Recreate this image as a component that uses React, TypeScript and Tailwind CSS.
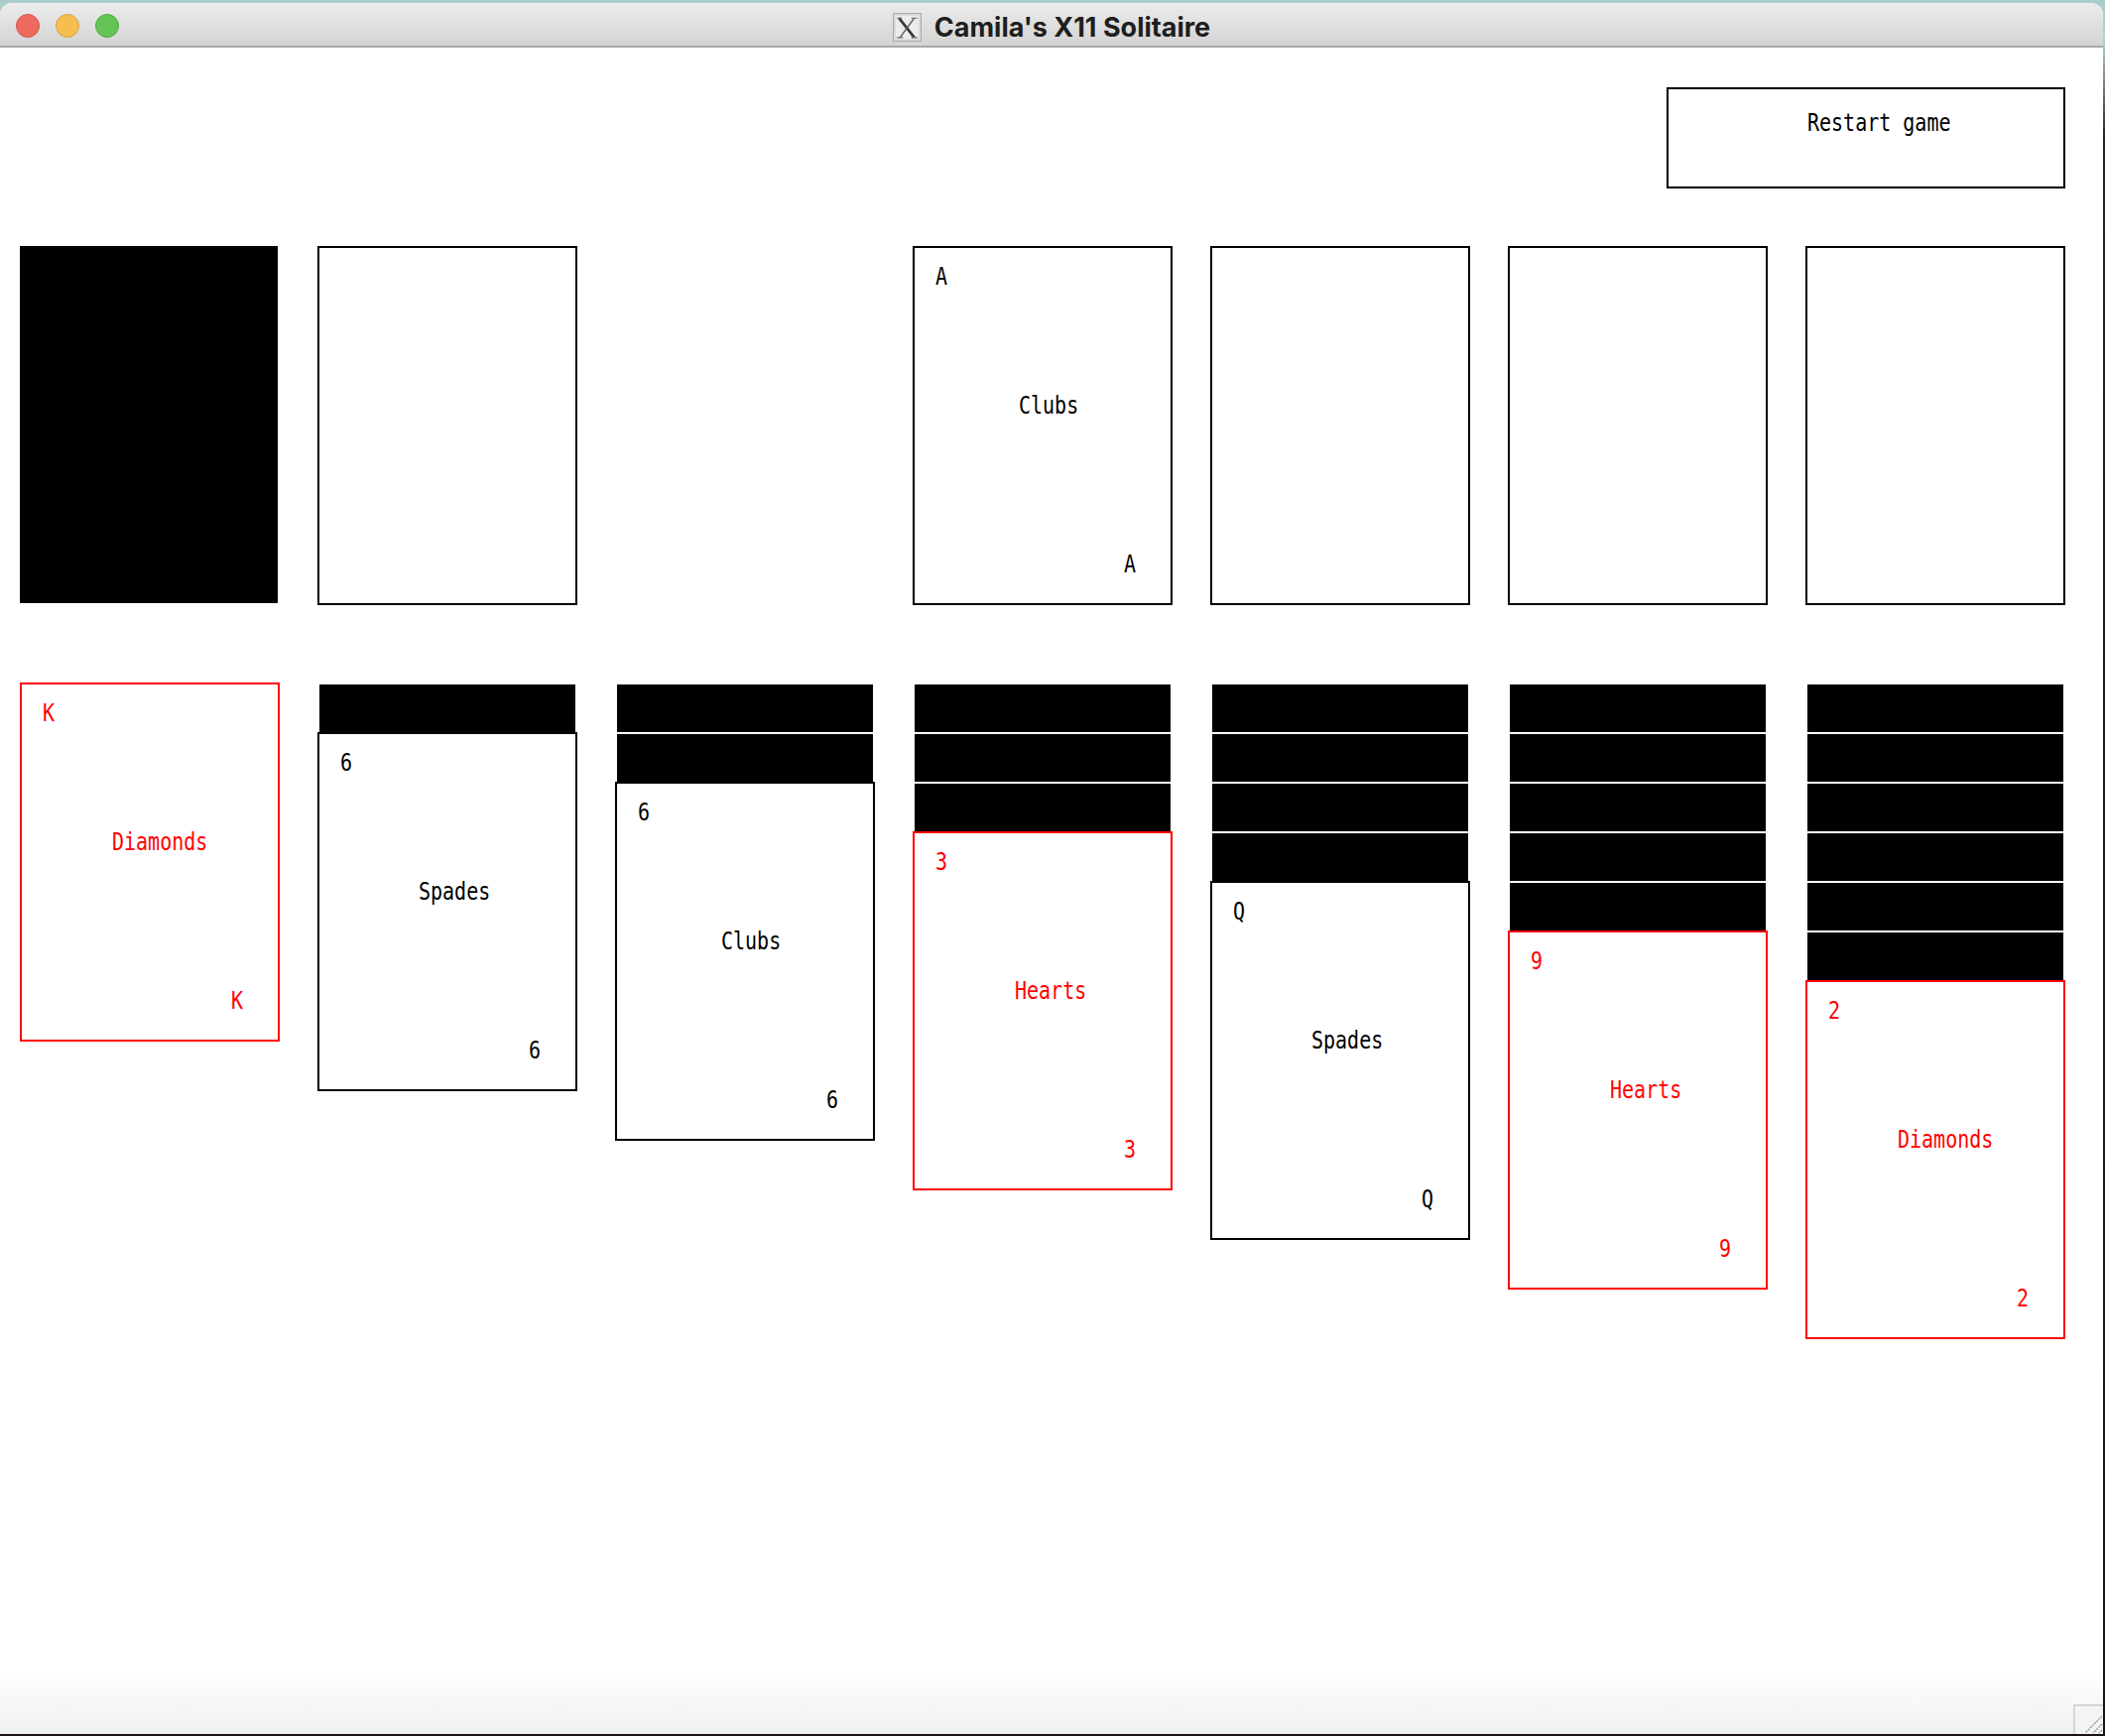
import React from "react";

type Suit = "Clubs" | "Spades" | "Hearts" | "Diamonds";

const centerMargin: Record<Suit, string> = {
  Clubs: "ml-[105px]",
  Diamonds: "ml-[91px]",
  Spades: "ml-[100px]",
  Hearts: "ml-[101px]",
};

const mono = "font-['DejaVu_Sans_Mono','Liberation_Mono',monospace] text-[20px] leading-[20px] h-[20px] scale-y-[1.2] whitespace-pre";

function FaceUp({ rank, suit }: { rank: string; suit: Suit }) {
  const red = suit === "Hearts" || suit === "Diamonds";
  return (
    <div
      className={`w-[262px] h-[362px] border-2 bg-white flex flex-col items-start ${
        red ? "border-[#ff0000] text-[#ff0000]" : "border-black text-black"
      }`}
    >
      <span className={`${mono} mt-[19px] ml-[21px]`}>{rank}</span>
      <span className={`${mono} mt-[110px] ${centerMargin[suit]}`}>{suit}</span>
      <span className={`${mono} mt-[140px] ml-[211px]`}>{rank}</span>
    </div>
  );
}

function EmptySlot() {
  return <div className="w-[262px] h-[362px] border-2 border-black bg-white" />;
}

function FaceDownSliver() {
  return (
    <div className="h-[50px] pt-[2px] pl-[2px]">
      <div className="w-[258px] h-[48px] bg-black" />
    </div>
  );
}

const tableau: { down: number; rank: string; suit: Suit }[] = [
  { down: 0, rank: "K", suit: "Diamonds" },
  { down: 1, rank: "6", suit: "Spades" },
  { down: 2, rank: "6", suit: "Clubs" },
  { down: 3, rank: "3", suit: "Hearts" },
  { down: 4, rank: "Q", suit: "Spades" },
  { down: 5, rank: "9", suit: "Hearts" },
  { down: 6, rank: "2", suit: "Diamonds" },
];

function XLogo() {
  return (
    <svg width="29" height="29" viewBox="0 0 28 28">
      <rect x="0.5" y="0.5" width="27" height="27" fill="#e4e4e4" stroke="#a9a9a9" />
      <rect x="2" y="2" width="24" height="24" fill="#ececec" stroke="#cfcfcf" />
      <path d="M6 5 L21 24" stroke="#3a3a3a" strokeWidth="2.6" />
      <path d="M21 5 L7 24" stroke="#5a5a5a" strokeWidth="1.4" />
      <path d="M4 5 H9 M18 5 H24 M4 24 H10 M18 24 H24" stroke="#6a6a6a" strokeWidth="1" />
    </svg>
  );
}

export default function App() {
  return (
    <div className="w-[2122px] h-[1750px] overflow-hidden bg-[linear-gradient(to_bottom,#a9cccb_0px,#b8d3d0_40px,#2a201c_140px,#1a1311_100%)]">
      <div className="w-[2120px] h-[1745px] mt-[3px] rounded-t-[12px] overflow-hidden flex flex-col bg-white">
        {/* Title bar */}
        <div className="h-[45px] shrink-0 border-b-2 border-[#a8a8a8] bg-[linear-gradient(to_bottom,#ececec,#d3d3d3)] grid grid-cols-[1fr_auto_1fr] items-center">
          <div className="flex items-center gap-[16px] pl-[16px] pt-[2px]">
            <div className="w-[24px] h-[24px] rounded-full bg-[#ee6a5f] border border-[#d4524a]" />
            <div className="w-[24px] h-[24px] rounded-full bg-[#f5be4f] border border-[#d7a243]" />
            <div className="w-[24px] h-[24px] rounded-full bg-[#62c554] border border-[#4ea73f]" />
          </div>
          <div className="flex items-center gap-[13px] pt-[6px]">
            <XLogo />
            <span className="font-['Inter',sans-serif] font-bold text-[27px] leading-[30px] text-[#1e1e1e]">
              Camila's X11 Solitaire
            </span>
          </div>
          <div />
        </div>

        {/* Content */}
        <div className="flex-1 flex flex-col bg-[linear-gradient(to_bottom,#ffffff_0,#ffffff_calc(100%-60px),#efefef_100%)]">
          <div className="flex justify-end pt-[40px] pr-[38px]">
            <div className="w-[402px] h-[102px] border-2 border-black bg-white flex flex-col items-start text-black">
              <span className={`${mono} mt-[24px] ml-[140px]`}>Restart game</span>
            </div>
          </div>

          <div className="flex items-start gap-[38px] pl-[20px] mt-[58px]">
            <div className="w-[262px] h-[362px]">
              <div className="w-[260px] h-[360px] bg-black" />
            </div>
            <EmptySlot />
            <div className="w-[262px] h-[362px]" />
            <FaceUp rank="A" suit="Clubs" />
            <EmptySlot />
            <EmptySlot />
            <EmptySlot />
          </div>

          <div className="flex items-start gap-[38px] pl-[20px] mt-[78px]">
            {tableau.map((col, i) => (
              <div key={i} className="flex flex-col w-[262px]">
                {Array.from({ length: col.down }).map((_, j) => (
                  <FaceDownSliver key={j} />
                ))}
                <FaceUp rank={col.rank} suit={col.suit} />
              </div>
            ))}
          </div>

          <div className="flex-1" />
          <div className="flex justify-end">
            <div className="w-[30px] h-[30px] border-l-2 border-t-2 border-[#d6d6d6] bg-[#f4f4f4]">
              <svg width="28" height="28" viewBox="0 0 28 28">
                <path d="M27 10 L10 27 M27 18 L18 27 M27 24 L24 27" stroke="#9a9a9a" strokeWidth="1.4" strokeDasharray="2 1" />
              </svg>
            </div>
          </div>
        </div>
      </div>
    </div>
  );
}
